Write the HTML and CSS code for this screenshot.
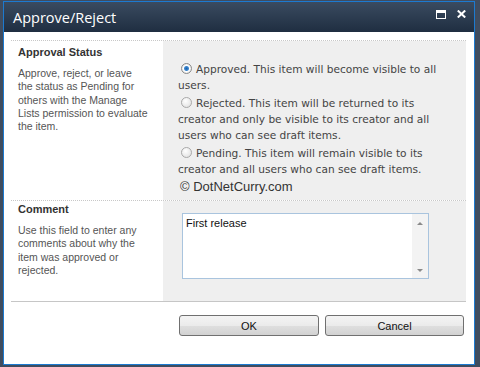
FILE: index.html
```html
<!DOCTYPE html>
<html>
	<head>
		<meta charset="utf-8">
		<title>Approve/Reject</title>
		<link rel="stylesheet" href="styles.css">
	</head>
	<body>
		<div class="window">
			<div class="frame">
				<!--标题栏-->
				<div class="titlebar">
					<span class="title">Approve/Reject</span>
					<span class="ctrls">
						<svg width="10" height="9" viewBox="0 0 10 9"><rect x="0.5" y="0.5" width="9" height="8" fill="none" stroke="#fff"/><rect x="1" y="1" width="8" height="2" fill="#fff"/></svg>
						<svg width="9" height="8" viewBox="0 0 9 8"><path d="M0.8 0.5 L8.2 7.5 M8.2 0.5 L0.8 7.5" stroke="#fff" stroke-width="2"/></svg>
					</span>
				</div>

				<div class="content">
					<!--状态-->
					<div class="section status">
						<div class="label">
							<h3>Approval Status</h3>
							<p>Approve, reject, or leave<br>the status as Pending for<br>others with the Manage<br>Lists permission to evaluate<br>the item.</p>
						</div>
						<div class="field">
							<div class="option"><i class="radio checked"></i>Approved. This item will become visible to all<br>users.</div>
							<div class="option"><i class="radio"></i>Rejected. This item will be returned to its<br>creator and only be visible to its creator and all<br>users who can see draft items.</div>
							<div class="option"><i class="radio"></i>Pending. This item will remain visible to its<br>creator and all users who can see draft items.</div>
							<div class="mark">&copy; DotNetCurry.com</div>
						</div>
					</div>

					<!--备注-->
					<div class="section comment">
						<div class="label">
							<h3>Comment</h3>
							<p>Use this field to enter any<br>comments about why the<br>item was approved or<br>rejected.</p>
						</div>
						<div class="field">
							<div class="textbox">
								<div class="text">First release</div>
								<div class="scroll">
									<span class="up"></span>
									<span class="down"></span>
								</div>
							</div>
						</div>
					</div>

					<!--按钮-->
					<div class="buttons">
						<button class="ok">OK</button>
						<button class="cancel">Cancel</button>
					</div>
				</div>
			</div>
		</div>
	</body>
</html>
```

FILE: styles.css
```css
* {
	margin: 0;
	padding: 0;
}

body {
	background: #3f4c5f;
}

.window {
	width: 480px;
	height: 367px;
	box-sizing: border-box;
	padding: 1px 5px 2px 3px;
	background: #3f4c5f;
}

.frame {
	height: 100%;
	box-sizing: border-box;
	border: 1px solid #1c7ad0;
	display: flex;
	flex-direction: column;
}

.titlebar {
	height: 30px;
	display: flex;
	justify-content: space-between;
	padding: 0 8px 0 9px;
	background: linear-gradient(#3a4b60, #1f2e41);
}

.titlebar .title {
	font-family: "Open Sans", sans-serif;
	font-size: 14.5px;
	line-height: 31px;
	color: #fff;
}

.titlebar .ctrls {
	display: flex;
	align-items: flex-start;
	gap: 11px;
	padding-top: 8px;
}

.content {
	flex: 1;
	background: #fff;
	padding: 8px 8px 0 7px;
}

.section {
	display: flex;
	border-top: 1px dotted #c8c8c8;
}

.section.status {
	height: 159px;
}

.section.comment {
	height: 100px;
}

.section .label {
	width: 152px;
	box-sizing: border-box;
	padding: 4px 7px 0;
	font-family: "Liberation Sans", sans-serif;
}

.section.comment .label {
	padding-top: 1px;
}

.section .label h3 {
	font-size: 11px;
	line-height: 14px;
	color: #333;
}

.section .label p {
	margin-top: 8px;
	font-size: 10.5px;
	line-height: 13.3px;
	color: #555;
}

.section .field {
	flex: 1;
	background: #efefef;
}

.status .field {
	padding: 20px 0 0 15px;
	font-family: "DejaVu Sans", sans-serif;
	font-size: 10.6px;
	line-height: 16px;
	color: #444;
}

.status .option {
	margin-bottom: 2px;
}

.status .radio {
	display: inline-block;
	width: 9px;
	height: 9px;
	border: 1px solid #a9a9a9;
	border-radius: 50%;
	background: radial-gradient(circle at 40% 35%, #fff, #dcdcdc);
	margin: 0 4px -1px 3px;
}

.status .radio.checked {
	background: radial-gradient(circle, #1d5fa8 0, #3b87d0 2px, #fff 3px, #e2e2e2 5px);
	border-color: #8a8a8a;
}

.status .mark {
	padding-left: 2px;
	font-family: "Liberation Sans", sans-serif;
	font-size: 13px;
	color: #333;
}

.comment .field {
	padding: 12px 0 0 19px;
}

.textbox {
	width: 247px;
	height: 66px;
	box-sizing: border-box;
	border: 1px solid #a9c4de;
	background: #fff;
	display: flex;
}

.textbox .text {
	flex: 1;
	padding: 2px 3px;
	font-family: "Liberation Sans", sans-serif;
	font-size: 11px;
	line-height: 14px;
	color: #111;
}

.textbox .scroll {
	width: 16px;
	background: #f3f3f3;
	display: flex;
	flex-direction: column;
	justify-content: space-between;
	align-items: center;
	padding: 8px 0 6px;
}

.textbox .up,
.textbox .down {
	width: 0;
	height: 0;
	border-left: 3px solid transparent;
	border-right: 3px solid transparent;
}

.textbox .up {
	border-bottom: 3px solid #8a8a8a;
}

.textbox .down {
	border-top: 3px solid #8a8a8a;
}

.buttons {
	border-top: 1px solid #c6c6c6;
	display: flex;
	justify-content: flex-end;
	gap: 6px;
	padding: 13px 2px 0 0;
}

.buttons button {
	height: 21px;
	border: 1px solid #707070;
	border-radius: 3px;
	background: linear-gradient(#f4f4f4 0%, #ebebeb 50%, #dfdfdf 51%, #d2d2d2 100%);
	font-family: "Liberation Sans", sans-serif;
	font-size: 11px;
	color: #111;
}

.buttons .ok {
	width: 140px;
}

.buttons .cancel {
	width: 139px;
}
```
